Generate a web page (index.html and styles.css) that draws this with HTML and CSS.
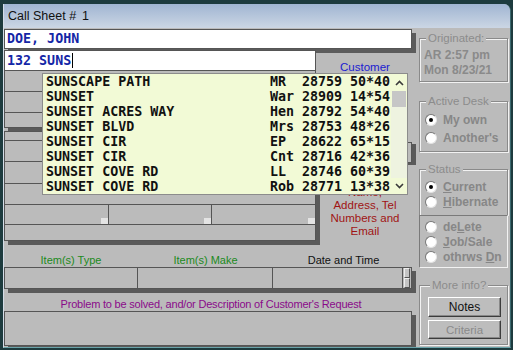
FILE: index.html
```html
<!DOCTYPE html>
<html lang="en">
<head>
    <meta charset="UTF-8">
    <title>Call Sheet # 1</title>
    <link rel="stylesheet" href="styles.css">
</head>
<body>
  <div class="window">
    <div class="titlebar">Call Sheet #<span class="sheet-no">1</span></div>
    <div class="client">
      <div class="main">
        <div class="field name-field">DOE, JOHN</div>

        <div class="cust-area">
          <div class="cust-fields">
            <div class="field addr-field">132 SUNS<span class="caret"></span></div>
            <div class="block block-a">
              <div class="frow h21"></div>
              <div class="frow h21"></div>
              <div class="frow h15"></div>
            </div>
            <div class="block block-b">
              <div class="frow h10"></div>
              <div class="frow h21"></div>
              <div class="frow h22"></div>
              <div class="frow h21"></div>
              <div class="frow h20 cells">
                <div class="cell"><span class="combo"></span></div>
                <div class="cell"><span class="combo"></span></div>
                <div class="cell"><span class="combo"></span></div>
              </div>
              <div class="frow h16"></div>
            </div>
          </div>
          <div class="cust-side">
            <div class="lbl lbl-customer">Customer</div>
            <div class="mini-btn"></div>
            <div class="lbl lbl-name">Name,<br>Address, Tel<br>Numbers and<br>Email</div>
          </div>

          <!-- street lookup list, drops over the fields -->
          <div class="dropdown">
            <div class="dd-rows">
              <div class="dd-row"><span>SUNSCAPE PATH</span><span>MR</span><span>28759</span><span>50*40</span></div>
              <div class="dd-row"><span>SUNSET</span><span>War</span><span>28909</span><span>14*54</span></div>
              <div class="dd-row"><span>SUNSET ACRES WAY</span><span>Hen</span><span>28792</span><span>54*40</span></div>
              <div class="dd-row"><span>SUNSET BLVD</span><span>Mrs</span><span>28753</span><span>48*26</span></div>
              <div class="dd-row"><span>SUNSET CIR</span><span>EP</span><span>28622</span><span>65*15</span></div>
              <div class="dd-row"><span>SUNSET CIR</span><span>Cnt</span><span>28716</span><span>42*36</span></div>
              <div class="dd-row"><span>SUNSET COVE RD</span><span>LL</span><span>28746</span><span>60*39</span></div>
              <div class="dd-row"><span>SUNSET COVE RD</span><span>Rob</span><span>28771</span><span>13*38</span></div>
            </div>
            <div class="dd-scroll">
              <div class="sb-btn up">
                <svg width="9" height="6" viewBox="0 0 9 6"><path d="M1 5 L4.5 1.5 L8 5" fill="none" stroke="#3a3a3a" stroke-width="1.6"/></svg>
              </div>
              <div class="sb-thumb"></div>
              <div class="sb-track"></div>
              <div class="sb-btn down">
                <svg width="9" height="6" viewBox="0 0 9 6"><path d="M1 1 L4.5 4.5 L8 1" fill="none" stroke="#3a3a3a" stroke-width="1.6"/></svg>
              </div>
            </div>
          </div>
        </div>

        <div class="items-labels lbl">
          <div class="il-type">Item(s) Type</div>
          <div class="il-make">Item(s) Make</div>
          <div class="il-date">Date and Time</div>
        </div>
        <div class="items-row">
          <div class="icell w-type"></div>
          <div class="icell w-make"></div>
          <div class="icell w-date"></div>
          <div class="spin"><span></span><span></span></div>
        </div>

        <div class="lbl lbl-problem">Problem to be solved, and/or Description of Customer's Request</div>
        <div class="problem-box"></div>
      </div>

      <div class="side">
        <fieldset class="grp grp-orig">
          <legend>Originated:</legend>
          <div class="orig-line">AR 2:57 pm</div>
          <div class="orig-line">Mon 8/23/21</div>
        </fieldset>

        <fieldset class="grp grp-desk">
          <legend>Active Desk</legend>
          <div class="radio"><i class="on"></i>My own</div>
          <div class="radio"><i></i>Another's</div>
        </fieldset>

        <fieldset class="grp grp-status">
          <legend>Status</legend>
          <div class="radio tight"><i class="on"></i><span><u>C</u>urrent</span></div>
          <div class="radio tight"><i></i><span><u>H</u>ibernate</span></div>
        </fieldset>
        <div class="sunken">
          <div class="radio tight"><i></i><span>de<u>L</u>ete</span></div>
          <div class="radio tight"><i></i><span><u>J</u>ob/Sale</span></div>
          <div class="radio tight"><i></i><span>othrws <u>D</u>n</span></div>
        </div>

        <fieldset class="grp grp-more">
          <legend>More info?</legend>
          <div class="btn">Notes</div>
          <div class="btn disabled">Criteria</div>
        </fieldset>
      </div>
    </div>
  </div>
</body>
</html>
```

FILE: styles.css
```css
* {
    box-sizing: border-box;
}

body {
    margin: 0;
    background: #1d3b3e;
    font-family: "Liberation Sans", Arial, sans-serif;
}

.window {
    margin: 4px 0 0 3px;
    width: 508px;
    height: 344px;
    border-left: 1px solid #d4dde8;
    border-right: 1px solid #3c6a70;
    border-bottom: 1px solid #6aa4aa;
    border-top-right-radius: 7px;
    overflow: hidden;
    background: #bbbbbb;
}

.titlebar {
    height: 24px;
    line-height: 25px;
    padding-left: 4px;
    font-size: 12.5px;
    color: #111;
    background: linear-gradient(#a0b5d2, #cbd6e4);
}

.sheet-no {
    margin-left: 6px;
}

.client {
    display: flex;
    height: 319px;
    overflow: hidden;
}

.main {
    width: 414px;
    padding-top: 1px;
}

.lbl {
    font-size: 11px;
}

/* text boxes */
.field {
    background: #fff;
    border: 1px solid #555;
    font-family: "DejaVu Sans Mono", monospace;
    font-weight: bold;
    font-size: 13.33px;
    color: #1426a6;
    padding-left: 2px;
}

.name-field {
    width: 408px;
    height: 20px;
    line-height: 18px;
    box-shadow: 4px 4px 0 #5c5c5c;
}

.cust-area {
    position: relative;
    display: flex;
    margin-top: 1px;
}

.cust-fields {
    width: 312px;
}

.addr-field {
    height: 21px;
    line-height: 19px;
}

.caret {
    display: inline-block;
    width: 1px;
    height: 15px;
    background: #000;
    vertical-align: -3px;
    margin-left: 1px;
}

.block {
    border-left: 1px solid #555;
    border-right: 1px solid #555;
    box-shadow: 4px 4px 0 #5a5a5a;
    background: #bbbbbb;
}

.block-b {
    margin-top: 3px;
    border-top: 1px solid #555;
}

.frow {
    border-bottom: 1px solid #555;
}

.h10 { height: 9px; }
.h15 { height: 15px; }
.h16 { height: 16px; }
.h20 { height: 20px; }
.h21 { height: 21px; }
.h22 { height: 22px; }

.cells {
    display: flex;
}

.cell {
    flex: 1;
    display: flex;
    justify-content: flex-end;
    align-items: flex-end;
    border-right: 1px solid #555;
}

.cell:last-child {
    border-right: 0;
}

.combo {
    width: 7px;
    height: 6px;
    background: #e4e4e4;
}

.cust-side {
    flex: 1;
    padding-top: 10px;
    padding-right: 4px;
}

.lbl-customer {
    text-align: center;
    color: #1a1ad0;
    line-height: 14px;
    font-size: 11.5px;
}

.mini-btn {
    margin: 68px 0 0 84px;
    width: 12px;
    height: 21px;
    border: 1px solid #555;
    background: #bbb;
    box-shadow: 4px 2px 0 #5a5a5a;
}

.lbl-name {
    margin-top: 23px;
    text-align: center;
    line-height: 13px;
    font-size: 11.5px;
    color: #a01414;
}

/* lookup list */
.dropdown {
    position: absolute;
    left: 38px;
    top: 23px;
    width: 366px;
    height: 122px;
    border: 1px solid #8c8c8c;
    background: #f2fad6;
    display: flex;
    z-index: 2;
}

.dd-rows {
    flex: 1;
    padding-left: 3px;
    font-family: "DejaVu Sans Mono", monospace;
    font-weight: bold;
    font-size: 13.33px;
    color: #111;
}

.dd-row {
    display: grid;
    grid-template-columns: 224px 32px 48px auto;
    height: 15px;
    line-height: 15px;
    white-space: pre;
}

.dd-scroll {
    width: 16px;
    display: flex;
    flex-direction: column;
}

.sb-btn {
    height: 17px;
    display: flex;
    justify-content: center;
    align-items: center;
}

.sb-btn.down {
    height: 16px;
}

.sb-thumb {
    height: 16px;
    margin: 0 1px;
    background: #c6c6c6;
}

.sb-track {
    flex: 1;
    background: #eef3e0;
}

/* item row */
.items-labels {
    display: flex;
    margin-top: 12px;
    height: 14px;
    line-height: 14px;
    text-align: center;
}

.il-type { width: 134px; color: #1c8a1c; }
.il-make { width: 135px; color: #1c8a1c; }
.il-date { width: 141px; color: #111; }

.items-row {
    display: flex;
    width: 408px;
    height: 22px;
    border: 1px solid #555;
    box-shadow: 4px 4px 0 #5a5a5a;
}

.icell {
    border-right: 1px solid #555;
}

.w-type { width: 133px; }
.w-make { width: 135px; }
.w-date { width: 130px; }

.spin {
    flex: 1;
    display: flex;
    flex-direction: column;
    padding: 0 1px;
}

.spin span {
    flex: 1;
    border: 1px solid;
    border-color: #eee #555 #555 #eee;
    background: #c4c4c4;
}

.lbl-problem {
    margin-top: 8px;
    height: 14px;
    line-height: 14px;
    text-align: center;
    letter-spacing: -0.2px;
    color: #8a0a8a;
}

.problem-box {
    width: 408px;
    height: 35px;
    border: 1px solid #555;
    box-shadow: 4px 4px 0 #5a5a5a;
}

/* right column */
.side {
    width: 92px;
    padding-left: 1px;
}

.grp {
    margin: 0;
    min-width: 0;
    width: 89px;
    border: 1px solid #8a8a8a;
    box-shadow: inset 1px 1px 0 #f2f2f2, 1px 1px 0 #f2f2f2;
    padding: 3px 2px 3px 4px;
}

.grp legend {
    font-size: 11.5px;
    line-height: 14px;
    color: #8c8c8c;
    padding: 0 2px;
    margin-left: 2px;
    background: #bbbbbb;
}

.grp-orig {
    margin-top: 3px;
}

.orig-line {
    font-weight: bold;
    font-size: 12px;
    line-height: 15px;
    color: #8a8a8a;
}

.grp-desk {
    margin-top: 12px;
    padding-bottom: 4px;
}

.grp-status {
    margin-top: 10px;
    padding-bottom: 6px;
    border-bottom: 0;
}

.radio {
    display: flex;
    align-items: center;
    height: 18px;
    font-weight: bold;
    font-size: 12px;
    color: #878787;
}

.radio.tight {
    height: 15px;
}

.radio i {
    width: 12px;
    height: 12px;
    margin: 0 6px 0 1px;
    border-radius: 50%;
    border: 1px solid;
    border-color: #777 #e4e4e4 #e4e4e4 #777;
    background: #fff;
    display: flex;
    justify-content: center;
    align-items: center;
}

.radio i.on::after {
    content: "";
    width: 4px;
    height: 4px;
    border-radius: 50%;
    background: #000;
}

.sunken {
    width: 89px;
    border: 1px solid;
    border-color: #7a7a7a #f2f2f2 #f2f2f2 #7a7a7a;
    padding: 3px 0 3px 4px;
}

.grp-more {
    margin-top: 10px;
    padding: 5px 0 5px 8px;
}

.btn {
    width: 73px;
    height: 20px;
    line-height: 18px;
    text-align: center;
    font-size: 12px;
    color: #111;
    border: 1px solid;
    border-color: #fff #3c3c3c #3c3c3c #fff;
    box-shadow: inset -1px -1px 0 #888;
    background: #bdbdbd;
}

.btn.disabled {
    margin-top: 3px;
    height: 19px;
    font-size: 11.5px;
    color: #8a8a8a;
}
```
